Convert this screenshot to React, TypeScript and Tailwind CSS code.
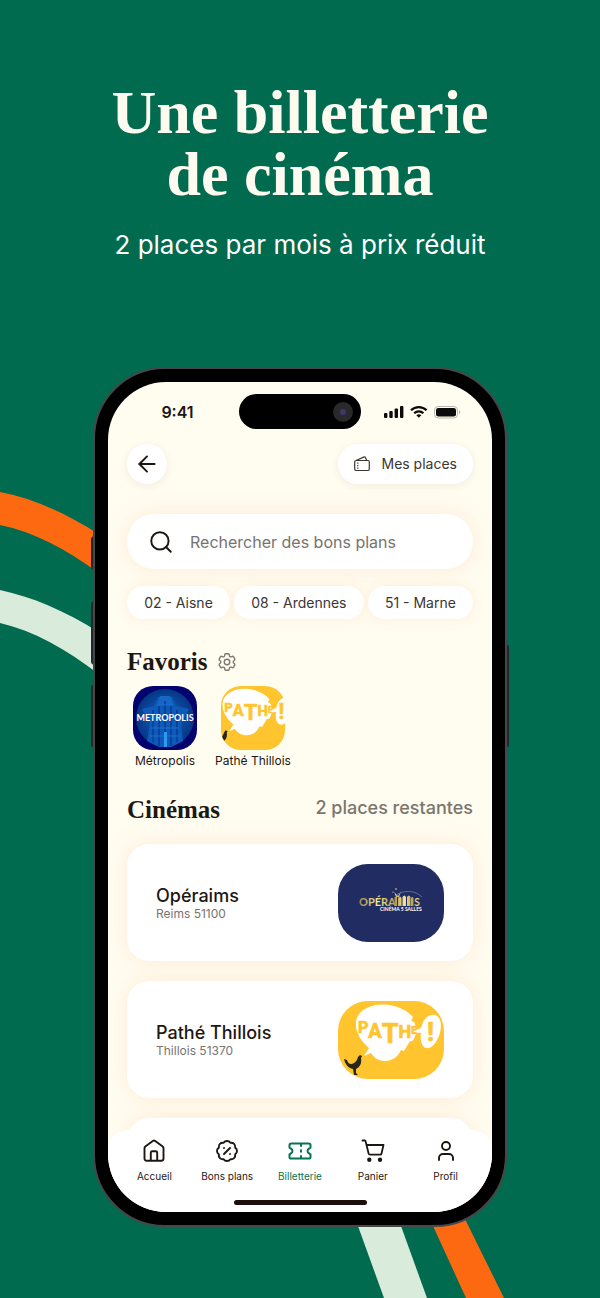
import type { ReactNode } from 'react';
import { ArrowLeft, BadgePercent, Search, User } from 'lucide-react';
import { HiOutlineCog6Tooth } from 'react-icons/hi2';

function Ribbons() {
  return (
    <svg
      className="absolute inset-0 h-full w-full"
      viewBox="0 0 600 1298"
      preserveAspectRatio="xMidYMid slice"
      aria-hidden="true"
    >
      <path d="M0 492C32 498 64 512 100 535V574C66 549 34 532 0 525Z" fill="#fd6910" />
      <path d="M0 590C32 597 64 610 100 633V675C66 649 34 631 0 623Z" fill="#d9ebdb" />
      <path d="M354 1215H397L427 1298H384Z" fill="#d9ebdb" />
      <path d="M428 1215H463L504 1298H466Z" fill="#fd6910" />
    </svg>
  );
}

function StatusIcons() {
  return (
    <svg className="h-4 w-[77px]" viewBox="0 0 77 16" fill="#0b0b0b" aria-hidden="true">
      <rect x="0" y="9" width="3.4" height="5" rx="1" />
      <rect x="5.3" y="7" width="3.4" height="7" rx="1" />
      <rect x="10.6" y="4.500" width="3.4" height="9.500" rx="1" />
      <rect x="16" y="2" width="3.4" height="12" rx="1" />
      <g fill="none" stroke="#0b0b0b" strokeWidth="2.300">
        <path d="M27 6.300a11 11 0 0 1 15.600 0" />
        <path d="M30.200 9.300a6.600 6.600 0 0 1 9.200 0" />
      </g>
      <path d="M34.800 13.800l-2.500-2.500a3.700 3.700 0 0 1 5 0z" />
      <rect x="50.500" y="2.500" width="23" height="11.500" rx="3.600" fill="none" stroke="#b9b8ae" />
      <rect x="52" y="4" width="20" height="8.500" rx="2.300" />
      <path d="M75 6.300v4c1.600-.6 1.600-3.400 0-4z" fill="#b9b8ae" />
    </svg>
  );
}

function WalletIcon() {
  return (
    <svg className="h-4 w-4" viewBox="0 0 16 16" fill="none" stroke="#3a3632" strokeWidth="1.200" strokeLinejoin="round" aria-hidden="true">
      <rect x=".7" y="4.500" width="14.600" height="10" rx="1.600" />
      <path d="M2 4.500L10.300.9c.5-.2.900 0 1.100.5l1.400 3.100" />
      <path d="M3.800 6.500v1.200M3.800 9v1.200M3.800 11.500v1.200" />
    </svg>
  );
}

function HomeIcon() {
  return (
    <svg className="h-6 w-6" viewBox="0 0 24 24" fill="none" stroke="currentColor" strokeWidth="1.900" strokeLinejoin="round" aria-hidden="true">
      <path d="M2.500 9.200c0-.7.300-1.200.8-1.600l7.500-5.700c.7-.5 1.700-.5 2.400 0l7.500 5.700c.5.4.8.9.8 1.600v10.300c0 1.400-.8 2.200-2.200 2.200H4.700c-1.400 0-2.200-.8-2.200-2.200z" />
      <path d="M8.800 21.700v-8c0-1 .5-1.500 1.500-1.500h3.400c1 0 1.500.5 1.500 1.500v8" />
    </svg>
  );
}

function TicketIcon() {
  return (
    <svg className="h-6 w-6" viewBox="0 0 24 24" fill="none" stroke="currentColor" strokeWidth="2" strokeLinejoin="round" aria-hidden="true">
      <path d="M3.200 4.500h17.600c1 0 1.700.6 1.700 1.600v2.500l-1.800 1.200c-1.500 1-1.500 3.400 0 4.400l1.800 1.200v2.500c0 1-.7 1.600-1.700 1.600H3.200c-1 0-1.700-.6-1.700-1.600v-2.500l1.800-1.200c1.500-1 1.500-3.400 0-4.400L1.500 8.600V6.100c0-1 .7-1.600 1.700-1.600z" />
      <path d="M13 5v2.800M13 10.400v3.200M13 16.200V19" />
    </svg>
  );
}

function CartIcon() {
  return (
    <svg className="h-6 w-6" viewBox="0 0 24 24" fill="none" stroke="currentColor" strokeWidth="1.800" strokeLinecap="round" strokeLinejoin="round" aria-hidden="true">
      <path d="M1.500 1.500h2.200c.5 0 .8.300.9.800l3 12.200c.2.700.7 1.100 1.400 1.100h10.200c.7 0 1.200-.4 1.300-1.100l2-8.500H5.600" />
      <circle cx="8.300" cy="20.700" r="1.300" fill="currentColor" />
      <circle cx="19" cy="20.700" r="1.300" fill="currentColor" />
    </svg>
  );
}

function PatheLogo({ compact = false }: { compact?: boolean }) {
  return (
    <svg
      className={compact ? 'h-16 w-16 rounded-[20px]' : 'h-[78px] w-[106px] shrink-0 rounded-[30px]'}
      viewBox={compact ? '16 0 78 78' : '0 0 106 78'}
      role="img"
      aria-label="Pathé"
    >
      <rect width="106" height="78" fill="#ffc42e" />
      <path
        d="M18 21C19 9 33 3 46 3.500C57 4 68 8 75 16L73 20C77 20 78 24 77 28C80 29 82 28 84 25C85 18 91 13 97 14C104 16 104 26 101 35C98 43 93 48 88 47C83 45 82 38 83 32C80 31 78 32 77 35C76 39 74 41 72 40L69 45L66 50L63 49C60 56 54 60 47 60C41 60 36 57 33 52L26 55L31 47C23 40 17 31 18 21Z"
        fill="#fff"
      />
      <g className="font-['Roboto',sans-serif] font-bold" fill="#ffc42e" stroke="#ffc42e" strokeWidth=".7">
        <text x="20" y="32">
          <tspan fontSize="16">P</tspan>
          <tspan fontSize="20" dy="5">A</tspan>
          <tspan fontSize="27" dy="5">T</tspan>
          <tspan fontSize="18" dy="-5">H</tspan>
          <tspan fontSize="10" dy="-4">E</tspan>
        </text>
        <text x={compact ? 86 : 89} y="40" fontSize="26">!</text>
      </g>
      <path
        d="M6 58l3 1c1 4 4 5 7 3 2-1 3-3 4-6l2-2 2 1-1 2c1 5-1 9-5 11v4l2 2h-4l-1-6c-5-1-8-5-9-10z"
        fill="#2b2718"
      />
    </svg>
  );
}

function MetropolisLogo() {
  return (
    <svg className="h-16 w-16 rounded-[20px]" viewBox="0 0 64 64" role="img" aria-label="Métropolis">
      <defs>
        <radialGradient id="glow">
          <stop offset="0" stopColor="#126bd0" />
          <stop offset="1" stopColor="#063583" />
        </radialGradient>
      </defs>
      <rect width="64" height="64" fill="#02036f" />
      <circle cx="32" cy="32" r="29" fill="url(#glow)" />
      <path d="M9 23l12-3 4-9h14l4 9 13 3-8 15 2 17-12 6H26l-12-6 3-17z" fill="#0d5ab8" />
      <path d="M27 10h10l3 9H24z" fill="#1667c4" />
      <path d="M26 20v40M32 15v46M38 20v40M20 24v32M44 24v32" stroke="#063b96" strokeWidth="1.500" />
      <path d="M18 42h28M17 50h30M24 19h16" stroke="#1a70cc" strokeWidth="1" />
      <path d="M31 46h3v15h-3z" fill="#2d9af0" />
      <text x="32" y="35" textAnchor="middle" fontSize="9" fill="#fff" className="font-['Lato',sans-serif] font-bold">
        METROPOLIS
      </text>
    </svg>
  );
}

function OperaimsLogo() {
  return (
    <svg className="h-[78px] w-[106px] shrink-0 rounded-[30px]" viewBox="0 0 106 78" role="img" aria-label="Opéraims">
      <defs>
        <linearGradient id="gold" x1="0" y1="0" x2="1" y2="0">
          <stop offset="0" stopColor="#a8904a" />
          <stop offset=".5" stopColor="#f4e79a" />
          <stop offset="1" stopColor="#b99a45" />
        </linearGradient>
      </defs>
      <rect width="106" height="78" fill="#212c62" />
      <g fill="url(#gold)" fontSize="11" className="font-['Lato',sans-serif] font-bold">
        <text x="21" y="42">OPÉRA</text>
        <text x="76" y="42">S</text>
      </g>
      <path d="M56.500 42V33h2.500v9zM60 42V34q2-3 3.500 0v8zM64.500 42V33q2-3 3.500 0v9zM69 42V33q2-3 3.500 0v9zM73 42V34q1.500-2 2.500 0v8z" fill="url(#gold)" />
      <path d="M56 28l4 4 3-5-2 6h-3z" fill="#d9c26c" />
      <path d="M58 31C66 26 77 26 84 33" fill="none" stroke="#6f7faf" strokeWidth=".8" />
      <circle cx="58" cy="25" r=".8" fill="#f4e79a" />
      <circle cx="55" cy="28" r=".6" fill="#f4e79a" />
      <text x="42" y="47" fontSize="5" fill="#fff" className="font-['Lato',sans-serif] font-bold">
        CINÉMA 5 SALLES
      </text>
    </svg>
  );
}

interface NavItem {
  label: string;
  icon: ReactNode;
  active?: boolean;
}

const departments = ['02 - Aisne', '08 - Ardennes', '51 - Marne'];

const favorites = [
  { name: 'Métropolis', logo: <MetropolisLogo /> },
  { name: 'Pathé Thillois', logo: <PatheLogo compact /> },
];

const cinemas = [
  { name: 'Opéraims', city: 'Reims 51100', logo: <OperaimsLogo /> },
  { name: 'Pathé Thillois', city: 'Thillois 51370', logo: <PatheLogo /> },
];

const navItems: NavItem[] = [
  { label: 'Accueil', icon: <HomeIcon /> },
  { label: 'Bons plans', icon: <BadgePercent className="h-6 w-6" strokeWidth={1.9} /> },
  { label: 'Billetterie', icon: <TicketIcon />, active: true },
  { label: 'Panier', icon: <CartIcon /> },
  { label: 'Profil', icon: <User className="h-6 w-6" strokeWidth={1.9} /> },
];

function StatusBar() {
  return (
    <div className="grid grid-cols-[1fr_122px_1fr] items-center">
      <span className="pl-2 text-center text-base font-semibold">9:41</span>
      <div className="flex h-[35px] items-center justify-end rounded-full bg-black pr-2">
        <span className="flex h-5 w-5 items-center justify-center rounded-full bg-[#29292c]">
          <span className="h-1.5 w-1.5 rounded-full bg-[#3d3b66]" />
        </span>
      </div>
      <div className="flex justify-center pr-2">
        <StatusIcons />
      </div>
    </div>
  );
}

function BottomNav() {
  return (
    <div className="relative -mt-5 rounded-t-[20px] bg-white pb-[7px] pt-[9px]">
      <nav className="grid grid-cols-5 px-[10px]">
        {navItems.map((item) => (
          <a
            key={item.label}
            href="#"
            aria-current={item.active ? 'page' : undefined}
            className={`flex flex-col items-center gap-[5px] ${item.active ? 'text-[#08734f]' : 'text-[#1d1713]'}`}
          >
            {item.icon}
            <span className="whitespace-nowrap text-[10px] leading-4">{item.label}</span>
          </a>
        ))}
      </nav>
      <div className="mx-auto mt-4 h-[5px] w-[133px] rounded-full bg-[#1d0d0b]" />
    </div>
  );
}

export default function App() {
  return (
    <main className="relative flex min-h-screen flex-col items-center overflow-hidden bg-[#006b4e] px-4 pb-[71px] pt-[81px] font-['Inter',sans-serif]">
      <Ribbons />

      <header className="relative text-center">
        <h1 className="font-['Liberation_Serif',serif] text-[62px] font-bold leading-[62px] text-[#fdfbf0]">
          Une billetterie
          <br />
          de cinéma
        </h1>
        <p className="mt-6 text-[26px] leading-8 text-white">2 places par mois à prix réduit</p>
      </header>

      <div className="relative mt-[106px] w-full max-w-[414px]">
        <span className="absolute -left-0.5 top-[169px] h-[34px] w-1 rounded-l bg-[#242628]" />
        <span className="absolute -left-0.5 top-[234px] h-[64px] w-1 rounded-l bg-[#242628]" />
        <span className="absolute -left-0.5 top-[317px] h-[64px] w-1 rounded-l bg-[#242628]" />
        <span className="absolute -right-0.5 top-[277px] h-[104px] w-1 rounded-r bg-[#242628]" />

        <div className="relative rounded-[72px] border-2 border-[#46474a] bg-black p-[13px]">
          <div className="overflow-hidden rounded-[58px] bg-[#fffcf0] pt-3 text-[#1d1713]">
            <StatusBar />

            <div className="px-[19px]">
              <div className="mt-[15px] flex items-center justify-between">
                <button
                  type="button"
                  aria-label="Retour"
                  className="flex h-10 w-10 items-center justify-center rounded-full bg-white shadow-[0_2px_8px_rgba(90,70,40,0.08)]"
                >
                  <ArrowLeft className="h-[26px] w-[26px]" strokeWidth={1.8} />
                </button>
                <button
                  type="button"
                  className="flex h-10 items-center gap-[11px] rounded-full bg-white px-4 text-sm text-[#3a3632] shadow-[0_2px_8px_rgba(90,70,40,0.08)]"
                >
                  <WalletIcon />
                  Mes places
                </button>
              </div>

              <label className="mt-[30px] flex h-[55px] items-center gap-4 rounded-full bg-white pl-[21px] pr-5 shadow-[0_0_20px_rgba(255,205,170,0.35)]">
                <Search className="h-[26px] w-[26px] shrink-0" strokeWidth={1.8} />
                <input
                  type="search"
                  aria-label="Rechercher des bons plans"
                  placeholder="Rechercher des bons plans"
                  className="w-full min-w-0 bg-transparent text-base outline-none placeholder:text-[#77736f]"
                />
              </label>

              <div className="mt-[17px] flex gap-1">
                {departments.map((name) => (
                  <button
                    key={name}
                    type="button"
                    className="h-[33px] flex-auto whitespace-nowrap rounded-full bg-white text-sm text-[#3a3632] shadow-[0_0_12px_rgba(255,205,170,0.3)]"
                  >
                    {name}
                  </button>
                ))}
              </div>

              <section>
                <div className="mt-[27px] flex items-center gap-2">
                  <h2 className="font-['Liberation_Serif',serif] text-[25px] font-bold leading-8">Favoris</h2>
                  <button type="button" aria-label="Modifier les favoris" className="text-[#7d7871]">
                    <HiOutlineCog6Tooth className="h-[22px] w-[22px]" />
                  </button>
                </div>
                <ul className="mt-2 flex gap-3">
                  {favorites.map((cinema) => (
                    <li key={cinema.name} className="flex w-[76px] flex-col items-center gap-px">
                      {cinema.logo}
                      <span className="whitespace-nowrap text-xs leading-5">{cinema.name}</span>
                    </li>
                  ))}
                </ul>
              </section>

              <section>
                <div className="mt-[23px] flex items-start justify-between">
                  <h2 className="font-['Liberation_Serif',serif] text-[25px] font-bold leading-8">Cinémas</h2>
                  <span className="text-lg font-medium leading-7 text-[#7a756d]">2 places restantes</span>
                </div>
                <div className="mt-[18px] flex flex-col gap-5">
                  {cinemas.map((cinema) => (
                    <article
                      key={cinema.name}
                      className="flex h-[117px] items-center justify-between rounded-[22px] bg-white px-[29px] shadow-[0_0_20px_rgba(255,205,170,0.35)]"
                    >
                      <div className="pt-0.5">
                        <h3 className="text-lg font-medium leading-5">{cinema.name}</h3>
                        <p className="text-xs leading-4 text-[#77736f]">{cinema.city}</p>
                      </div>
                      {cinema.logo}
                    </article>
                  ))}
                  <div className="h-8 rounded-t-[22px] bg-white shadow-[0_0_20px_rgba(255,205,170,0.35)]" />
                </div>
              </section>
            </div>

            <BottomNav />
          </div>
        </div>
      </div>
    </main>
  );
}
